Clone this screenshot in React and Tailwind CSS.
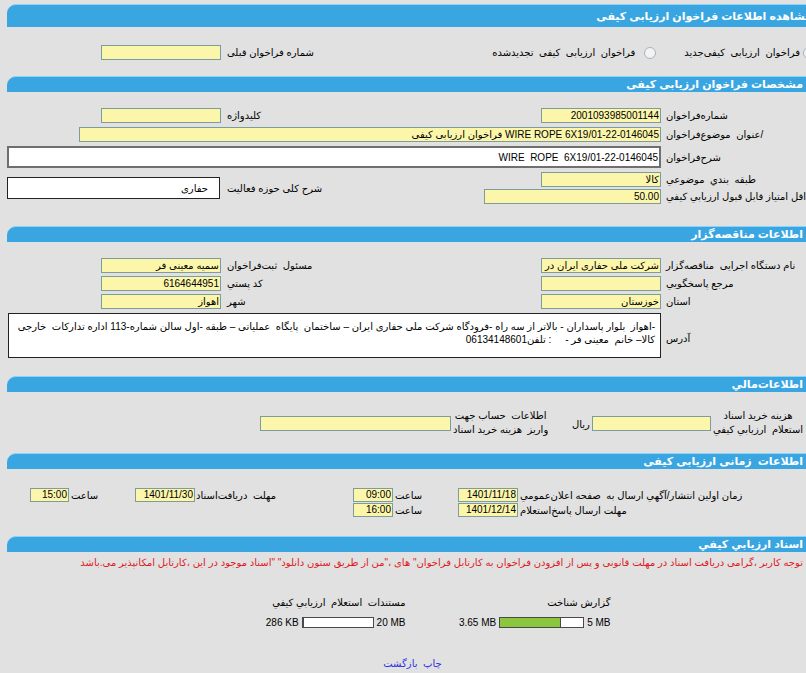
import React from 'react';

const Z = '\u200c';
const S = '\u00a0';

function Bar({ title, tall }) {
  return (
    <div
      dir="rtl"
      className={`${tall ? 'h-[23px]' : 'h-[16px]'} flex items-center overflow-hidden rounded-tl-[9px] border-t border-[#8dd3f5] bg-[#39a6e2] text-[11px] font-bold text-white`}
    >
      <span className={`whitespace-nowrap ${tall ? 'mr-[-6px]' : 'mr-[3px]'}`}>{title}</span>
    </div>
  );
}

function Inp({ cls = '', children, short }) {
  return (
    <div
      dir="rtl"
      className={`${short ? 'h-[14px]' : 'h-[15px]'} flex shrink-0 items-center overflow-hidden whitespace-nowrap border border-[#7d9c9c] bg-[#fcf6ab] pr-[1px] leading-none ${cls}`}
    >
      {children}
    </div>
  );
}

function Lbl({ cls = '', children }) {
  return (
    <div className={`shrink-0 ${cls}`}>
      <span dir="rtl" className="whitespace-nowrap">
        {children}
      </span>
    </div>
  );
}

function Radio({ cls = '' }) {
  return (
    <span
      className={`inline-block h-[12px] w-[12px] shrink-0 rounded-full border border-[#a9b3bc] bg-[#f3f3f3] ${cls}`}
    />
  );
}

function Prog({ pct, w }) {
  return (
    <div dir="ltr" className={`flex h-[11px] shrink-0 border border-[#4a4a4a] bg-white ${w}`}>
      <div className="h-full border-r border-[#4a4a4a] bg-[#8cc63f]" style={{ width: `${pct}%` }} />
    </div>
  );
}

const docs = [
  { title: 'گزارش شناخت', used: '3.65 MB', max: '5 MB', pct: 73, w: 'w-[85px]' },
  { title: `مستندات${S} استعلام${S} ارزیابي${Z} کیفي`, used: '286 KB', max: '20 MB', pct: 1.4, w: 'w-[72px]' },
];

export default function App() {
  return (
    <div className="h-[673px] w-[806px] overflow-hidden bg-[#e1e1e1] font-['Liberation_Sans','DejaVu_Sans',sans-serif] text-[10px] leading-[15px] text-black">
      <div className="ml-[7px] pt-[4px]">
        {/* Section 1 */}
        <Bar tall title="مشاهده اطلاعات فراخوان ارزیابی کیفی" />
        <div className="h-[49px] pt-[18px]">
          <div className="flex h-[15px] items-center">
            <div className="w-[94px] shrink-0" />
            <Inp cls="w-[120px]" />
            <Lbl cls="pl-[6px]">شماره فراخوان قبلی</Lbl>
            <div dir="rtl" className="ml-auto flex items-center">
              <Radio cls="mr-[-9px]" />
              <span className="mr-[3px] whitespace-nowrap">{`فراخوان${S} ارزیابی${S} کیفی${Z}جدید`}</span>
              <Radio cls="mr-[28px]" />
              <span className="mr-[9px] whitespace-nowrap">{`فراخوان${S} ارزیابی${S} کیفی${S} تجدیدشده`}</span>
            </div>
          </div>
        </div>

        {/* Section 2 */}
        <Bar title="مشخصات فراخوان ارزیابی کیفی" />
        <div className="h-[134px] pt-[16px]">
          <div className="flex h-[15px] items-center">
            <div className="w-[94px] shrink-0" />
            <Inp cls="w-[120px]" />
            <Lbl cls="w-[320px] pl-[6px]">کلیدواژه</Lbl>
            <Inp cls="w-[120px]">2001093985001144</Inp>
            <Lbl cls="pl-[5px]">{`شماره${Z}فراخوان`}</Lbl>
          </div>
          <div className="mt-[4px] flex h-[15px] items-center">
            <div className="w-[72px] shrink-0" />
            <Inp cls="w-[582px]">WIRE ROPE 6X19/01-22-0146045 فراخوان ارزیابی کیفی</Inp>
            <Lbl cls="pl-[5px]">{`/عنوان${S} موضوع${Z}فراخوان`}</Lbl>
          </div>
          <div className="mt-[4px] flex items-center">
            <div
              dir="rtl"
              className="flex h-[22px] w-[654px] shrink-0 items-center overflow-hidden whitespace-nowrap border-2 border-[#6f6f6f] bg-white pr-[1px]"
            >
              {`WIRE${S} ROPE${S} 6X19/01-22-0146045`}
            </div>
            <Lbl cls="pl-[5px]">{`شرح${Z}فراخوان`}</Lbl>
          </div>
          <div className="mt-[4px] flex">
            <div className="flex w-[477px] shrink-0 items-center">
              <div
                dir="rtl"
                className="flex h-[22px] w-[213px] shrink-0 items-center border border-[#222] bg-white pr-[11px]"
              >
                حفاری
              </div>
              <Lbl cls="pl-[7px]">شرح کلی حوزه فعالیت</Lbl>
            </div>
            <div className="flex flex-col gap-[2px]">
              <div className="flex h-[15px] items-center">
                <div className="w-[57px] shrink-0" />
                <Inp cls="w-[120px]">کالا</Inp>
                <Lbl cls="pl-[5px]">{`طبقه${S} بندي${S} موضوعي`}</Lbl>
              </div>
              <div className="flex h-[15px] items-center">
                <Inp cls="w-[177px]">50.00</Inp>
                <Lbl cls="pl-[5px]">حداقل امتیاز قابل قبول ارزیابي کیفي</Lbl>
              </div>
            </div>
          </div>
        </div>

        {/* Section 3 */}
        <Bar title={`اطلاعات مناقصه${Z}گزار`} />
        <div className="h-[134px] pt-[16px]">
          <div className="flex h-[15px] items-center">
            <div className="w-[94px] shrink-0" />
            <Inp cls="w-[120px]">سمیه معینی فر</Inp>
            <Lbl cls="w-[320px] pl-[6px]">{`مسئول${S} ثبت${Z}فراخوان`}</Lbl>
            <Inp cls="w-[120px]">شرکت ملی حفاری ایران در منطقه</Inp>
            <Lbl cls="pl-[5px]">{`نام دستگاه اجرایی${S} مناقصه${Z}گزار`}</Lbl>
          </div>
          <div className="mt-[3px] flex h-[15px] items-center">
            <div className="w-[94px] shrink-0" />
            <Inp cls="w-[120px]">6164644951</Inp>
            <Lbl cls="w-[320px] pl-[6px]">کد پستي</Lbl>
            <Inp cls="w-[120px]" />
            <Lbl cls="pl-[5px]">مرجع پاسخگويي</Lbl>
          </div>
          <div className="mt-[3px] flex h-[15px] items-center">
            <div className="w-[94px] shrink-0" />
            <Inp cls="w-[120px]">اهواز</Inp>
            <Lbl cls="w-[320px] pl-[6px]">شهر</Lbl>
            <Inp cls="w-[120px]">خوزستان</Inp>
            <Lbl cls="pl-[5px]">استان</Lbl>
          </div>
          <div className="mt-[4px] flex items-center">
            <div className="w-[1px] shrink-0" />
            <div
              dir="rtl"
              className="h-[45px] w-[653px] shrink-0 overflow-hidden whitespace-nowrap border border-[#222] bg-white pr-[5px] pt-[6px] leading-[13px]"
            >
              <div>{`-اهواز${S} بلوار پاسداران - بالاتر از سه راه -فرودگاه شرکت ملی حفاری ایران – ساختمان${S} پایگاه${S} عملیاتی – طبقه -اول سالن شماره-113 اداره تدارکات${S} خارجی`}</div>
              <div>{`کالا– خانم${S} معینی فر -${S}${S}${S}${S} : تلفن06134148601`}</div>
            </div>
            <Lbl cls="pl-[5px] pt-[6px]">آدرس</Lbl>
          </div>
        </div>

        {/* Section 4 */}
        <Bar title={`اطلاعات${Z}مالي`} />
        <div className="h-[61px] pt-[17px]">
          <div className="flex h-[28px] items-center">
            <div className="w-[253px] shrink-0" />
            <Inp cls="w-[191px]" />
            <div className="flex w-[121px] shrink-0 items-center pl-[2px]">
              <div dir="rtl" className="whitespace-nowrap text-center leading-[14px]">
                <div>{`اطلاعات${S} حساب${Z} جهت`}</div>
                <div>{`واریز${S} هزینه خرید اسناد`}</div>
              </div>
            </div>
            <div className="flex w-[20px] shrink-0 items-center pt-[2px]">
              <span dir="rtl">ريال</span>
            </div>
            <Inp cls="w-[119px]" />
            <div className="flex shrink-0 items-center pl-[2px]">
              <div dir="rtl" className="whitespace-nowrap text-center leading-[14px]">
                <div>هزینه خرید اسناد</div>
                <div>{`استعلام${S} ارزيابي کیفي`}</div>
              </div>
            </div>
          </div>
        </div>

        {/* Section 5 */}
        <Bar title={`اطلاعات${S} زمانی ارزیابی کیفی`} />
        <div className="h-[67px] pt-[19px]">
          <div className="flex h-[14px] items-center">
            <div className="w-[23px] shrink-0" />
            <Inp short cls="w-[39px]">15:00</Inp>
            <Lbl cls="w-[66px] pl-[2px]">ساعت</Lbl>
            <Inp short cls="w-[60px]">1401/11/30</Inp>
            <Lbl cls="w-[158px] pl-[1px]">{`مهلت${S} دریافت${Z}اسناد`}</Lbl>
            <Inp short cls="w-[40px]">09:00</Inp>
            <Lbl cls="w-[65px] pl-[2px]">ساعت</Lbl>
            <Inp short cls="w-[60px]">1401/11/18</Inp>
            <Lbl cls="pl-[2px]">{`زمان اولین انتشار/آگهي ارسال به${S} صفحه اعلان${Z}عمومي`}</Lbl>
          </div>
          <div className="mt-[1px] flex h-[14px] items-center">
            <div className="w-[346px] shrink-0" />
            <Inp short cls="w-[40px]">16:00</Inp>
            <Lbl cls="w-[65px] pl-[2px]">ساعت</Lbl>
            <Inp short cls="w-[60px]">1401/12/14</Inp>
            <Lbl cls="pl-[2px]">{`مهلت ارسال پاسخ${Z}استعلام`}</Lbl>
          </div>
        </div>

        {/* Section 6 */}
        <Bar title="اسناد ارزیابي کیفي" />
        <div className="pt-[5px]">
          <div dir="rtl" className="whitespace-nowrap pr-[3px] leading-[12px] text-[#e0191e]">
            توجه کاربر ،گرامی دریافت اسناد در مهلت قانونی و پس از افزودن فراخوان به کارتابل فراخوان" های ،"من از طریق ستون دانلود" "اسناد موجود در این ،کارتابل امکانپذیر می.باشد
          </div>
          <div dir="rtl" className="mx-auto mt-[28px] grid w-[410px] grid-cols-2">
            {docs.map((d) => (
              <div key={d.title} className="flex flex-col items-start pr-[1px]">
                <div className="h-[12px] whitespace-nowrap leading-[12px]">{d.title}</div>
                <div className="mt-[7px] flex h-[12px] items-center gap-[3px] whitespace-nowrap">
                  <span dir="ltr">{d.max}</span>
                  <Prog pct={d.pct} w={d.w} />
                  <span dir="ltr">{d.used}</span>
                </div>
              </div>
            ))}
          </div>
          <div dir="rtl" className="ml-[12px] mt-[30px] text-center leading-[12px] text-[#3030e0]">
            <a className="cursor-pointer">چاپ</a>
            <span>{`${S} `}</span>
            <a className="cursor-pointer">بازگشت</a>
          </div>
        </div>
      </div>
    </div>
  );
}
